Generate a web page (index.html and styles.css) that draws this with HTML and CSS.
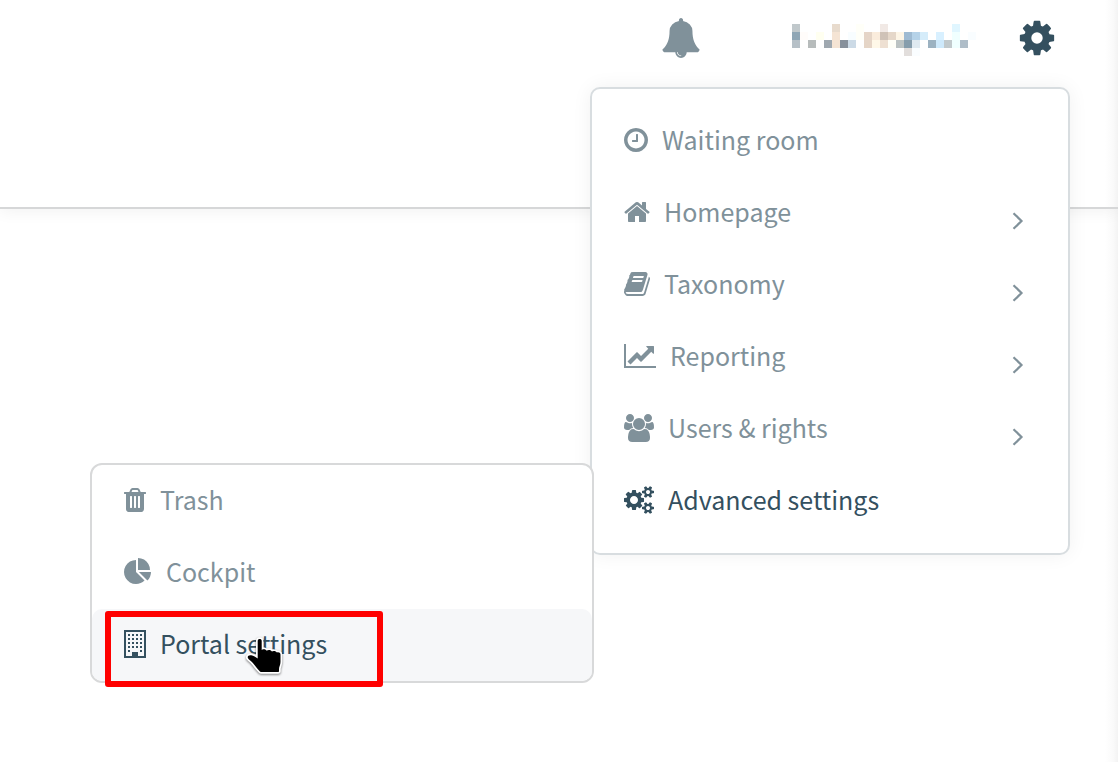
FILE: index.html
```html
<!DOCTYPE html>
<html lang="en">
<head>
<meta charset="utf-8">
<title>Portal administration</title>
<link rel="stylesheet" href="styles.css">
</head>
<body>
<div class="page">
  <header class="header">
    <svg class="icon-bell" viewBox="0 0 1792 1792"><path d="M912 1696q0-16-16-16-59 0-101.500-42.500t-42.500-101.500q0-16-16-16t-16 16q0 73 51.500 124.500t124.500 51.500q16 0 16-16zm816-288q0 52-38 90t-90 38h-448q0 106-75 181t-181 75-181-75-75-181h-448q-52 0-90-38t-38-90q50-42 91-88t85-119.500 74.500-158.500 50-206 19.500-260q0-152 117-282.500t307-158.500q-8-19-8-39 0-40 28-68t68-28 68 28 28 68q0 20-8 39 190 28 307 158.500t117 282.500q0 139 19.500 260t50 206 74.500 158.500 85 119.500 91 88z"/></svg>
    <svg class="user-name" viewBox="0 0 24 4" shape-rendering="crispEdges">
      <path fill="#c0c8cb" d="M0 0h1v1h-1z"/><path fill="#e8dbcd" d="M5 0h1v1h-1z"/><path fill="#f1e9e5" d="M11 0h1v1h-1z"/><path fill="#e0f6ff" d="M20 0h1v1h-1z"/>
      <path fill="#8fa6b5" d="M0 1h1v1h-1z"/><path fill="#fffcfa" d="M1 1h1v1h-1z"/><path fill="#fffff0" d="M3 1h1v1h-1z"/><path fill="#f5e4d4" d="M5 1h1v2h-1z"/><path fill="#f8fdff" d="M7 1h1v1h-1z"/><path fill="#fffff8" d="M8 0h1v2h-1z"/><path fill="#e5d5c7" d="M9 1h1v2h-1z"/><path fill="#faecdc" d="M10 1h1v1h-1z"/><path fill="#cfc2b7" d="M11 1h1v1h-1z"/><path fill="#e5d7c9" d="M12 1h1v1h-1z"/><path fill="#fdf5e6" d="M13 1h1v1h-1z"/><path fill="#9ebad2" d="M14 1h1v1h-1z"/><path fill="#b5d2e8" d="M15 1h1v1h-1z"/><path fill="#d5ecfa" d="M16 1h1v1h-1z"/><path fill="#d8f0ff" d="M18 1h1v1h-1z"/><path fill="#f0ffff" d="M20 1h1v2h-1z"/><path fill="#f9fdff" d="M22 1h1v1h-1z"/>
      <path fill="#b6c0c7" d="M0 2h1v1h-1z"/><path fill="#b7bcbc" d="M2 2h1v1h-1z"/><path fill="#9fa8b0" d="M4 2h1v1h-1z"/><path fill="#87909b" d="M6 2h1v1h-1z"/><path fill="#ccdae6" d="M7 2h1v1h-1z"/><path fill="#fff8e8" d="M10 2h1v1h-1z"/><path fill="#eee0d2" d="M11 2h1v1h-1z"/><path fill="#fffff8" d="M12 2h1v1h-1z"/><path fill="#bcc3c3" d="M13 2h1v1h-1z"/><path fill="#869dac" d="M14 2h1v1h-1z"/><path fill="#dfe9f0" d="M15 2h1v1h-1z"/><path fill="#9cb2c1" d="M17 2h1v1h-1z"/><path fill="#cee9fb" d="M18 2h1v1h-1z"/><path fill="#c1c9cc" d="M19 2h1v1h-1z"/><path fill="#afbdc8" d="M21 2h1v1h-1z"/>
      <path fill="#e2dedc" d="M14 3h1v1h-1z"/><path fill="#fafdff" d="M15 3h1v1h-1z"/>
    </svg>
    <svg class="icon-cog" viewBox="0 0 1792 1792"><path d="M1152 896q0-106-75-181t-181-75-181 75-75 181 75 181 181 75 181-75 75-181zm512-109v222q0 12-8 23t-20 13l-185 28q-19 54-39 91 35 50 107 138 10 12 10 25t-9 23q-27 37-99 108t-94 71q-12 0-26-9l-138-108q-44 23-91 38-16 136-29 186-7 28-36 28h-222q-14 0-24.500-8.500t-11.500-21.500l-28-184q-49-16-90-37l-141 107q-10 9-25 9-14 0-25-11-126-114-165-168-7-10-7-23 0-12 8-23 15-21 51-66.500t54-70.500q-27-50-41-99l-183-27q-13-2-21-12.500t-8-23.500v-222q0-12 8-23t19-13l186-28q14-46 39-92-40-57-107-138-10-12-10-24 0-10 9-23 26-36 98.500-107.500t94.500-71.500q13 0 26 10l138 107q44-23 91-38 16-136 29-186 7-28 36-28h222q14 0 24.500 8.500t11.500 21.500l28 184q49 16 90 37l142-107q9-9 24-9 13 0 25 10 129 119 165 170 7 8 7 22 0 12-8 23-15 21-51 66.500t-54 70.500q26 50 41 98l183 28q13 2 21 12.500t8 23.500z"/></svg>
  </header>
</div>

<nav class="menu main-menu">
  <a class="item">
    <svg class="icon w24" viewBox="128 0 1536 1792"><path d="M1024 544v448q0 14-9 23t-23 9h-320q-14 0-23-9t-9-23v-64q0-14 9-23t23-9h224v-352q0-14 9-23t23-9h64q14 0 23 9t9 23zm416 352q0-148-73-273t-198-198-273-73-273 73-198 198-73 273 73 273 198 198 273 73 273-73 198-198 73-273zm224 0q0 209-103 385.500t-279.500 279.500-385.500 103-385.500-103-279.500-279.500-103-385.500 103-385.500 279.500-279.500 385.500-103 385.500 103 279.500 279.500 103 385.500z"/></svg>
    <span class="label">Waiting room</span>
  </a>
  <a class="item">
    <svg class="icon w26" viewBox="64 0 1664 1792"><path d="M1472 992v480q0 26-19 45t-45 19h-384v-384h-256v384h-384q-26 0-45-19t-19-45v-480q0-1 .5-3t.5-3l575-474 575 474q1 2 1 6zm223-69l-62 74q-8 9-21 11h-3q-13 0-21-7l-692-577-692 577q-12 8-24 7-13-2-21-11l-62-74q-8-10-7-23.500t11-21.500l719-599q32-26 76-26t76 26l244 204v-195q0-14 9-23t23-9h192q14 0 23 9t9 23v408l219 182q10 8 11 21.500t-7 23.500z"/></svg>
    <span class="label">Homepage</span>
    <svg class="chevron" viewBox="0 0 12 18"><path d="M1.500 1.200 9.500 9l-8 7.800"/></svg>
  </a>
  <a class="item">
    <svg class="icon w26" viewBox="64 0 1664 1792"><path d="M1703 478q40 57 18 129l-275 906q-19 64-76.500 107.500t-122.500 43.500h-923q-77 0-148.500-53.500t-99.500-131.500q-24-67-2-127 0-4 3-27t4-37q1-8-3-21.500t-3-19.500q2-11 8-21t16.500-23.500 16.500-23.500q23-38 45-91.500t30-91.500q3-10 .5-30t-.5-28q3-11 17-28t17-23q21-36 42-92t25-90q1-9-2.500-32t.5-28q4-13 22-30.500t22-22.500q19-26 42.500-84.500t27.500-96.500q1-8-3-25.500t-2-26.500q2-8 9-18t18-23 17-21q8-12 16.500-30.500t15-35 16-36 19.500-32 26.500-23.500 36-11.500 47.500 5.500l-1 3q38-9 51-9h761q74 0 114 56t18 130l-274 906q-36 119-71.500 153.500t-128.500 34.500h-869q-27 0-38 15-11 16-1 43 24 70 144 70h923q29 0 56-15.500t35-41.500l300-987q7-22 5-57 38 15 59 43zm-1064 2q-4 13 2 22.500t20 9.500h608q13 0 25.500-9.500t16.500-22.500l21-64q4-13-2-22.500t-20-9.500h-608q-13 0-25.500 9.500t-16.500 22.500zm-83 256q-4 13 2 22.500t20 9.500h608q13 0 25.500-9.500t16.500-22.500l21-64q4-13-2-22.500t-20-9.500h-608q-13 0-25.500 9.500t-16.500 22.500z"/></svg>
    <span class="label">Taxonomy</span>
    <svg class="chevron" viewBox="0 0 12 18"><path d="M1.500 1.200 9.500 9l-8 7.800"/></svg>
  </a>
  <a class="item">
    <svg class="icon w32" viewBox="0 0 2048 1792"><path d="M2048 1536v128h-2048v-1536h128v1408h1920zm-128-1248v435q0 21-19.500 29.500t-35.500-7.500l-121-121-633 633q-10 10-23 10t-23-10l-233-233-416 416-192-192 585-585q10-10 23-10t23 10l233 233 464-464-121-121q-16-16-7.500-35.500t29.500-19.500h435q14 0 23 9t9 23z"/></svg>
    <span class="label">Reporting</span>
    <svg class="chevron" viewBox="0 0 12 18"><path d="M1.500 1.200 9.500 9l-8 7.800"/></svg>
  </a>
  <a class="item">
    <svg class="icon w30" viewBox="0 0 1920 1792"><path d="M593 896q-162 5-265 128h-134q-82 0-138-40.500t-56-118.500q0-353 124-353 6 0 43.500 21t97.500 42.500 119 21.500q67 0 133-23-5 37-5 66 0 139 81 256zm1071 637q0 120-73 189.500t-194 69.500h-874q-121 0-194-69.500t-73-189.500q0-53 3.500-103.500t14-109 26.500-108.500 43-97.500 62-81 85.500-53.500 111.500-20q10 0 43 21.500t73 48 107 48 135 21.500 135-21.500 107-48 73-48 43-21.500q61 0 111.500 20t85.500 53.500 62 81 43 97.500 26.500 108.500 14 109 3.500 103.500zm-1024-1277q0 106-75 181t-181 75-181-75-75-181 75-181 181-75 181 75 75 181zm704 384q0 159-112.500 271.500t-271.500 112.500-271.500-112.500-112.500-271.500 112.500-271.500 271.500-112.500 271.500 112.500 112.500 271.500zm576 225q0 78-56 118.500t-138 40.500h-134q-103-123-265-128 81-117 81-256 0-29-5-66 66 23 133 23 59 0 119-21.500t97.500-42.500 43.500-21q124 0 124 353zm-128-609q0 106-75 181t-181 75-181-75-75-181 75-181 181-75 181 75 75 181z"/></svg>
    <span class="label">Users &amp; rights</span>
    <svg class="chevron" viewBox="0 0 12 18"><path d="M1.500 1.200 9.500 9l-8 7.800"/></svg>
  </a>
  <a class="item active">
    <svg class="icon w30" viewBox="0 0 1920 1792">
      <path d="M896 896q0-106-75-181t-181-75-181 75-75 181 75 181 181 75 181-75 75-181zm384-91v185q0 10-7 19.500t-16 10.500l-155 24q-11 35-32 76 34 48 90 115 7 10 7 20 0 12-7 19-23 30-82.500 89.500t-78.500 59.500q-11 0-21-7l-115-90q-37 19-77 31-11 108-23 155-7 24-30 24h-186q-11 0-20-7.500t-10-17.500l-23-153q-34-10-75-31l-118 89q-7 7-20 7-11 0-21-8-144-133-144-160 0-9 7-19 10-14 41-53t47-61q-23-44-35-82l-152-24q-10-1-17-9.500t-7-19.500v-185q0-10 7-19.500t16-10.500l155-24q11-35 32-76-34-48-90-115-7-11-7-20 0-12 7-20 22-30 82-89t79-59q11 0 21 7l115 90q34-18 77-32 11-108 23-154 7-24 30-24h186q11 0 20 7.500t10 17.500l23 153q34 10 75 31l118-89q8-7 20-7 11 0 21 8 144 133 144 160 0 8-7 19-12 16-42 54t-45 60q23 48 34 82l152 23q10 2 17 10.500t7 19.500z"/>
      <path id="small-gear" d="M1664 1408q0-52-38-90t-90-38-90 38-38 90q0 53 37.500 90.500t90.500 37.500 90.500-37.500 37.500-90.500zm256-70v140q0 16-149 31-12 27-30 52 51 113 51 138 0 4-4 7-122 71-124 71-8 0-46-47t-52-68q-20 2-30 2t-30-2q-14 21-52 68t-46 47q-2 0-124-71-4-3-4-7 0-25 51-138-18-25-30-52-149-15-149-31v-140q0-16 149-31 13-29 30-52-51-113-51-138 0-4 4-7 4-2 35-20t59-34 30-16q8 0 46 46.500t52 67.500q20-2 30-2t30 2q51-71 92-112l6-2q4 0 124 70 4 3 4 7 0 25-51 138 17 23 30 52 149 15 149 31z"/>
      <use href="#small-gear" y="-1024"/>
    </svg>
    <span class="label">Advanced settings</span>
  </a>
</nav>

<nav class="menu sub-menu">
  <a class="item">
    <svg class="icon w22" viewBox="192 0 1408 1792"><path d="M704 1376v-704q0-14-9-23t-23-9h-64q-14 0-23 9t-9 23v704q0 14 9 23t23 9h64q14 0 23-9t9-23zm256 0v-704q0-14-9-23t-23-9h-64q-14 0-23 9t-9 23v704q0 14 9 23t23 9h64q14 0 23-9t9-23zm256 0v-704q0-14-9-23t-23-9h-64q-14 0-23 9t-9 23v704q0 14 9 23t23 9h64q14 0 23-9t9-23zm-544-992h448l-48-117q-7-9-17-11h-317q-10 2-17 11zm928 32v64q0 14-9 23t-23 9h-96v948q0 83-47 143.500t-113 60.500h-832q-66 0-113-58.500t-47-141.500v-952h-96q-14 0-23-9t-9-23v-64q0-14 9-23t23-9h309l70-167q15-37 54-63t79-26h320q40 0 79 26t54 63l70 167h309q14 0 23 9t9 23z"/></svg>
    <span class="label">Trash</span>
  </a>
  <a class="item">
    <svg class="icon w28" viewBox="0 0 1792 1792"><path d="M768 890l546 546q-106 108-247.500 168t-298.500 60q-209 0-385.500-103t-279.500-279.500-103-385.500 103-385.500 279.500-279.500 385.500-103v762zm187 6h773q0 157-60 298.500t-168 247.500zm709-128h-768v-768q209 0 385.500 103t279.500 279.500 103 385.500z"/></svg>
    <span class="label">Cockpit</span>
  </a>
  <a class="item active hovered">
    <svg class="icon w22" viewBox="0 0 22 28" shape-rendering="crispEdges">
      <path fill-rule="evenodd" d="M0 0h22v28H0zM2 2v24h6v-4h6v4h6V2z"/>
      <path d="M4 4h2v2H4zM8 4h2v2H8zM12 4h2v2h-2zM16 4h2v2h-2zM4 8h2v2H4zM8 8h2v2H8zM12 8h2v2h-2zM16 8h2v2h-2zM4 12h2v2H4zM8 12h2v2H8zM12 12h2v2h-2zM16 12h2v2h-2zM4 16h2v2H4zM8 16h2v2H8zM12 16h2v2h-2zM16 16h2v2h-2zM4 20h2v2H4zM16 20h2v2h-2z"/>
    </svg>
    <span class="label">Portal settings</span>
  </a>
</nav>

<div class="highlight"></div>
<svg class="pointer" viewBox="0 0 44 44"><path d="M12.700 5c0-2.600 4-2.600 4 0v9c.8-1.300 4.600-1 5 .8 1-1.300 4.800-1 5.200.8 1-1.200 4.600-.6 5 1 1.200-1 3.600-.2 3.600 1.800v7.600c0 3-1.500 4.500-1.500 7v2c0 .7-.3 1-1 1H16c-.6 0-1-.3-1.300-.8-1.700-2-3.700-4-5.200-6.200-1.500-2-3.500-4-5.500-5.500-2.600-2-1-4.800 2.200-4.200 2.500.4 4.500 1.700 6.500 3.200z"/></svg>
</body>
</html>
```
FILE: styles.css
```css
body {
  margin: 0;
  height: 762px;
  overflow: hidden;
  background: #fff;
  font-family: "Noto Sans CJK SC", "Noto Sans", sans-serif;
}

.page {
  height: 762px;
  background: linear-gradient(to left, #f3f3f3 0, #fafafa 5px, #fff 13px);
}

.header {
  box-sizing: border-box;
  height: 209px;
  padding: 18px 61px 0 0;
  display: flex;
  justify-content: flex-end;
  align-items: flex-start;
  border-bottom: 2px solid #d6d7d8;
  box-shadow: 0 2px 16px rgba(0, 0, 0, 0.06);
}

.icon-bell,
.icon-cog {
  width: 40px;
  height: 40px;
}

.icon-bell {
  fill: #80919a;
  margin-right: 91px;
}

.icon-cog {
  fill: #34505f;
}

.user-name {
  width: 192px;
  height: 32px;
  margin: 6px 33px 0 0;
}

.menu {
  position: absolute;
  box-sizing: border-box;
  background: #fff;
  border: 2px solid #d8dde0;
  border-radius: 10px;
}

.main-menu {
  left: 590px;
  top: 87px;
  width: 480px;
  height: 468px;
  padding: 15px 0;
  box-shadow: 0 0 20px rgba(0, 0, 0, 0.06);
}

.sub-menu {
  left: 90px;
  top: 463px;
  width: 504px;
  height: 220px;
  border-color: #d8d9da;
  border-radius: 12px;
}

.item {
  box-sizing: border-box;
  height: 72px;
  padding: 0 44px 0 32px;
  display: flex;
  align-items: center;
  gap: 14px;
  color: #80919a;
}

.sub-menu .item {
  padding-bottom: 2px;
}

.active {
  color: #34505f;
}

.sub-menu .active,
.main-menu .active {
  color: #34505f;
}

.hovered {
  background: #f6f7f9;
  border-radius: 10px;
}

.icon {
  height: 28px;
  flex: none;
  fill: currentColor;
}

.w22 { width: 22px; }
.w24 { width: 24px; }
.w26 { width: 26px; }
.w28 { width: 28px; }
.w30 { width: 30px; }
.w32 { width: 32px; }

.label {
  margin-top: -2px;
  font-size: 25px;
  line-height: 36px;
  white-space: nowrap;
}

.chevron {
  width: 12px;
  height: 18px;
  margin: 17px 0 0 auto;
  fill: none;
  stroke: currentColor;
  stroke-width: 2.2;
}

.highlight {
  position: absolute;
  box-sizing: border-box;
  left: 105px;
  top: 611px;
  width: 278px;
  height: 76px;
  border: 6px solid #f00;
  border-radius: 3px;
}

.pointer {
  position: absolute;
  left: 245px;
  top: 636px;
  width: 44px;
  height: 44px;
  overflow: visible;
  fill: #000;
  stroke: #fff;
  stroke-width: 3.4;
  stroke-linejoin: round;
  paint-order: stroke;
  filter: drop-shadow(0 1px 1px rgba(0, 0, 0, 0.5));
}
```
